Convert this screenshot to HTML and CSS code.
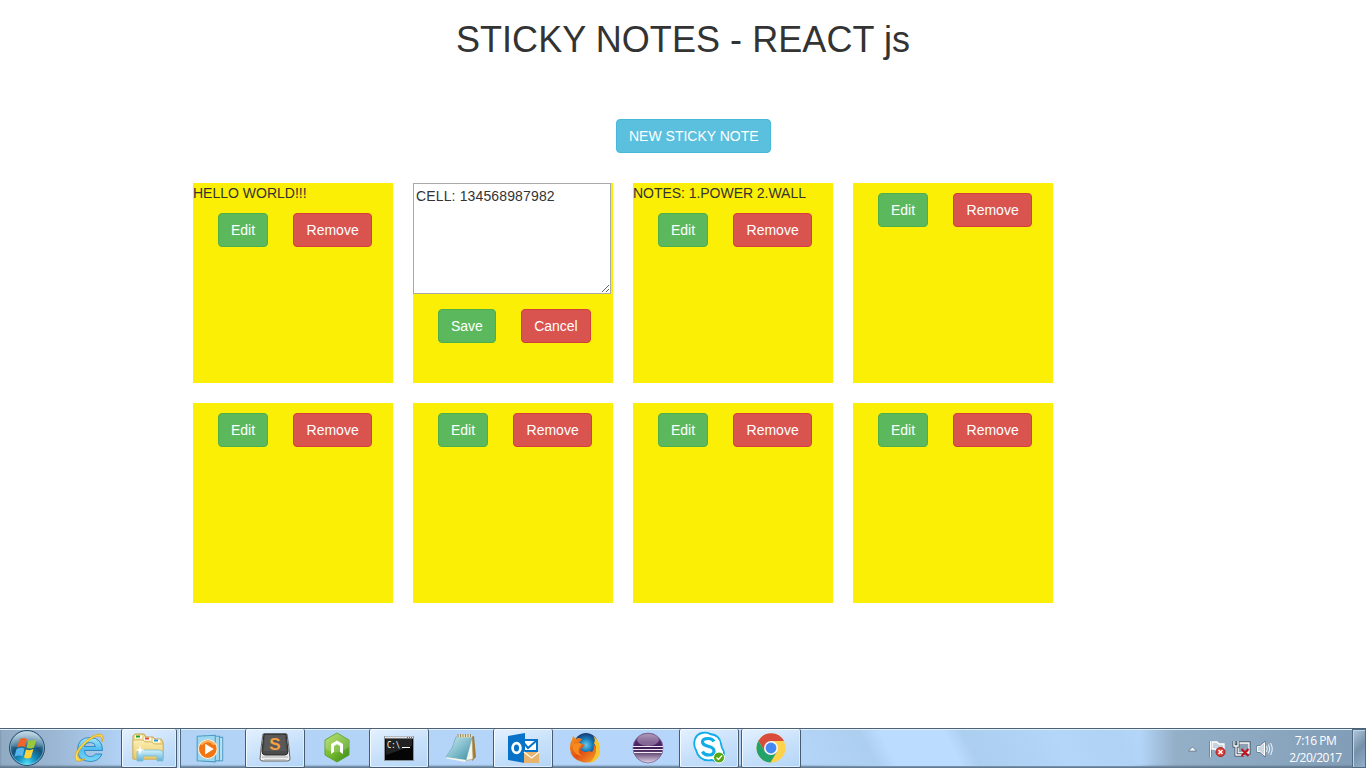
FILE: index.html
```html
<!DOCTYPE html>
<html lang="en">
<head>
<meta charset="utf-8">
<title>Sticky Notes</title>
<link rel="stylesheet" href="styles.css">
</head>
<body>
<main class="page">
  <h1 class="title">STICKY NOTES - REACT js</h1>
  <div class="toolbar"><button class="btn btn-info">NEW STICKY NOTE</button></div>
  <section class="board">
    <article class="note"><p class="text">HELLO WORLD!!!</p><div class="actions"><button class="btn btn-success">Edit</button><button class="btn btn-danger">Remove</button></div></article>
    <article class="note"><textarea class="editor" spellcheck="false">CELL: 134568987982</textarea><div class="actions actions-editing"><button class="btn btn-success">Save</button><button class="btn btn-danger btn-cancel">Cancel</button></div></article>
    <article class="note"><p class="text text-list">NOTES: 1.POWER 2.WALL</p><div class="actions"><button class="btn btn-success">Edit</button><button class="btn btn-danger">Remove</button></div></article>
    <article class="note"><div class="actions"><button class="btn btn-success">Edit</button><button class="btn btn-danger">Remove</button></div></article>
    <article class="note"><div class="actions"><button class="btn btn-success">Edit</button><button class="btn btn-danger">Remove</button></div></article>
    <article class="note"><div class="actions"><button class="btn btn-success">Edit</button><button class="btn btn-danger">Remove</button></div></article>
    <article class="note"><div class="actions"><button class="btn btn-success">Edit</button><button class="btn btn-danger">Remove</button></div></article>
    <article class="note"><div class="actions"><button class="btn btn-success">Edit</button><button class="btn btn-danger">Remove</button></div></article>
  </section>
</main>
<footer class="taskbar">
  <div class="slot slot-start">
    <svg width="38" height="38" viewBox="0 0 38 38">
      <defs>
        <radialGradient id="orb" cx=".5" cy=".95" r=".85"><stop offset="0" stop-color="#4fe2fa"/><stop offset=".3" stop-color="#1690c0"/><stop offset=".62" stop-color="#155277"/><stop offset="1" stop-color="#6f9fbe"/></radialGradient>
        <linearGradient id="gloss" x2="0" y2="1"><stop offset="0" stop-color="#fff" stop-opacity=".55"/><stop offset="1" stop-color="#fff" stop-opacity=".08"/></linearGradient>
      </defs>
      <circle cx="19" cy="19" r="17.500" fill="url(#orb)" stroke="#284d68"/>
      <circle cx="19" cy="19" r="16.500" fill="none" stroke="#a8d2e6" stroke-opacity=".55"/>
      <path d="M3.500 17Q5 3 19 2.500Q33 3 34.500 17Q19 22 3.500 17Z" fill="url(#gloss)"/>
      <path d="M11.500 10.500Q15 8 19 10L17 18Q13.500 16.500 9 18.500Z" fill="#ef6428"/>
      <path d="M20.500 11Q24 12.500 28.500 10L26 18.500Q22 20.500 18.500 18.500Z" fill="#99c83c"/>
      <path d="M8.500 20Q13 18 16.500 19.500L14.500 27.500Q11 25.500 6.500 28Z" fill="#55b5ed"/>
      <path d="M18 20.500Q22 22 25.500 20L23 28.500Q19.500 30.500 16 28.500Z" fill="#ffd438"/>
    </svg>
  </div>
  <div class="slot slot-ie">
    <svg width="34" height="34" viewBox="0 0 34 34">
      <defs><linearGradient id="ie" x2="0" y2="1"><stop offset="0" stop-color="#a4e6fc"/><stop offset=".5" stop-color="#4fbdf0"/><stop offset="1" stop-color="#79d7f7"/></linearGradient></defs>
      <path d="M30.500 19.500H12.500Q13 25.500 18.500 25.500Q22 25.500 23.500 23H30Q27 30.500 18 30.500Q5.500 30 5.500 18.500Q6 6.500 18 6.500Q30.500 7 30.500 19.500ZM12.500 15.500H23.500Q23 11.500 18.500 11.500Q13 11.500 12.500 15.500Z" fill="url(#ie)" stroke="#2d83c0" stroke-width=".9" fill-rule="evenodd"/>
      <path d="M30 11Q33 3 27 3Q20 4 11.500 12Q1 22 3.500 28.500Q6 32 13 28Q7 29.500 6 26Q4 21 14 12Q22 5 27 5Q30 5 30 11Z" fill="#ffe04d" stroke="#d9a51d" stroke-width=".8"/>
    </svg>
  </div>
  <div class="slot slot-files open">
    <svg width="34" height="34" viewBox="0 0 34 34">
      <defs><linearGradient id="folder" x2="0" y2="1"><stop offset="0" stop-color="#fbf0b5"/><stop offset="1" stop-color="#e9c967"/></linearGradient><linearGradient id="stand" x2="0" y2="1"><stop offset="0" stop-color="#d4f3fc"/><stop offset="1" stop-color="#61b3d7"/></linearGradient></defs>
      <path d="M2 28V5L4 3H13L15 6H22L24 8H30L32 11V28Z" fill="#f2dd92" stroke="#c7a34b"/>
      <path d="M4 6H11M13 8H20M22 10H29" stroke="#fff" stroke-width="3"/>
      <path d="M5 5.500H9" stroke="#13a51b" stroke-width="2"/><path d="M14 7.500H18" stroke="#e34829" stroke-width="2"/><path d="M23 9.500H27" stroke="#2797d5" stroke-width="2"/>
      <path d="M2 9H12L14 11H21L23 13H32V28H2Z" fill="url(#folder)" stroke="#d1b15a" stroke-width=".8"/>
      <path d="M6 30V22Q6 19 9 19H28Q32 19 32 22V30H26V25H12V30Z" fill="url(#stand)" stroke="#78bdd7" stroke-width=".8"/>
      <path d="M9 14L10 18L14 19L10 20L9 24L8 20L4 19L8 18Z" fill="#fff"/>
    </svg>
  </div>
  <div class="stack-edge"></div>
  <div class="slot slot-wide">
    <svg class="media-icon" width="34" height="34" viewBox="0 0 32 32">
      <path d="M10 6H27V28H10Z" fill="#b5e2f4" stroke="#589fc4"/><path d="M8 5H24V28H8Z" fill="#a4d8ef" stroke="#4ba1c8"/><path d="M3 5L20 4V29L3 28Z" fill="#9bd8f0" stroke="#4e9dc2"/>
      <circle cx="13" cy="17" r="8.800" fill="#f37512" stroke="#fff3df"/><path d="M7 13A7 7 0 0 1 19 13" fill="none" stroke="#ffb562" stroke-width="2"/><path d="M10.500 12V22L18.500 17Z" fill="#fff"/>
    </svg>
  </div>
  <div class="slot open">
    <svg width="34" height="34" viewBox="0 0 34 34">
      <path d="M5 3H29Q31 15 32 28Q32 30 29 30H5Q2 30 2 28Q3 15 5 3Z" fill="#eee" stroke="#666"/>
      <path d="M6 3H28L30 20Q30 24 27 24H7Q4 24 4 20Z" fill="#4c4c4c" stroke="#292929"/><path d="M7 4H27L28 20H6Z" fill="#595959"/><path d="M4 26H30M6 29H28" stroke="#aaa"/>
      <text class="sublime-letter" x="17" y="18.500" text-anchor="middle">S</text>
    </svg>
  </div>
  <div class="slot slot-wide">
    <svg width="32" height="32" viewBox="0 0 32 32">
      <defs><linearGradient id="hex" x2="1" y2="1"><stop stop-color="#a9db4f"/><stop offset=".55" stop-color="#6eb52c"/><stop offset="1" stop-color="#398619"/></linearGradient></defs>
      <path d="M16 1L28 8V23L16 30L4 23V8Z" fill="url(#hex)" stroke="#5ca22c"/><path d="M16 1L28 8V15Q14 25 4 16V8Z" fill="#fff" opacity=".18"/>
      <path d="M10 22V12L16 8.500L22 12V22L19 20V14L16 12.300L13 14V20Z" fill="#fff"/>
    </svg>
  </div>
  <div class="slot open">
    <svg width="32" height="32" viewBox="0 0 32 32">
      <path d="M1.500 4.500H30.500V28.500H1.500Z" fill="#050505" stroke="#88929b"/><path d="M2 5.500H30" stroke="#e2e5e7" stroke-width="2"/><path d="M24 5.500H29" stroke="#607080" stroke-dasharray="1 1"/><path d="M3 7H29V14L3 23Z" fill="#777" opacity=".26"/>
      <text class="prompt" x="4" y="16" textLength="13" lengthAdjust="spacingAndGlyphs">C:\</text><path d="M19 15.500H27" stroke="#fff"/>
    </svg>
  </div>
  <div class="slot slot-wide">
    <svg width="34" height="34" viewBox="0 0 34 34">
      <defs><linearGradient id="notepad" x2="1" y2="1"><stop stop-color="#c9ecef"/><stop offset=".5" stop-color="#86bfce"/><stop offset="1" stop-color="#3991a5"/></linearGradient></defs>
      <path d="M27 6L30 5L32 26L28 30Z" fill="#a27b37"/><path d="M26 6L28 7L29 28L20 30Z" fill="#f6f5e9" stroke="#aaa078" stroke-width=".6"/><path d="M12 6L28 6L22 29L2 26Q9 18 12 6Z" fill="url(#notepad)" stroke="#71a7b5" stroke-width=".7"/><path d="M2 26L22 29L21 31L3 27.500Z" fill="#f3f6ee"/><path d="M13 5H28" stroke="#eadfba" stroke-width="3"/><path d="M14 3V6M16.500 3V6M19 3V6M21.500 3V6M24 3V6M26.500 3V6" stroke="#968963"/>
    </svg>
  </div>
  <div class="slot slot-outlook open">
    <svg width="34" height="34" viewBox="0 0 34 34">
      <path d="M16 9H31V20H16Z" fill="#fff" stroke="#0872c8" stroke-width="2"/><path d="M17 11L22 17L30 10" fill="none" stroke="#0872c8" stroke-width="2"/>
      <path d="M2 5L19 2V32L2 29Z" fill="#0872c8"/><ellipse cx="10.500" cy="17" rx="3.900" ry="4.900" fill="none" stroke="#fff" stroke-width="2.700"/>
      <path d="M18 21H33V32H18Z" fill="#e7b36d"/><path d="M18 21L25.500 27L33 21" fill="none" stroke="#fff" stroke-width="1.300"/>
    </svg>
  </div>
  <div class="slot slot-wide">
    <svg width="32" height="32" viewBox="0 0 32 32">
      <defs><radialGradient id="globe"><stop stop-color="#67ceed"/><stop offset=".55" stop-color="#1778b8"/><stop offset="1" stop-color="#16386f"/></radialGradient><linearGradient id="fox" x2="1" y2="1"><stop stop-color="#f69b20"/><stop offset=".5" stop-color="#e34d16"/><stop offset="1" stop-color="#f5b32a"/></linearGradient></defs>
      <circle cx="17" cy="13" r="12" fill="url(#globe)"/>
      <path d="M4 4L7 7Q9 5 13 7L10 11L16 13L13 16L11 17Q15 22 20 19L23 20Q26 17 24 12L27 15L26 8Q34 18 28 26Q22 32 13 30Q2 27 1 17Q1 10 3 8Z" fill="url(#fox)"/>
      <path d="M24 4Q32 9 31 20Q30 29 20 31Q28 25 27 15L25 11Q27 8 24 4Z" fill="#f9c52f"/><path d="M3 9L5 12L9 11L13 12L11 15Q7 20 13 24Q6 23 4 17" fill="#f78a1c"/>
    </svg>
  </div>
  <div class="slot slot-eclipse">
    <svg width="32" height="32" viewBox="0 0 32 32">
      <defs><linearGradient id="eclipse" x2="0" y2="1"><stop stop-color="#8c7599"/><stop offset=".3" stop-color="#54286d"/><stop offset=".55" stop-color="#3b1d50"/><stop offset="1" stop-color="#e2d5e9"/></linearGradient></defs>
      <circle cx="16" cy="16" r="15" fill="url(#eclipse)" stroke="#806394" stroke-width=".8"/><ellipse cx="16" cy="8" rx="11" ry="6" fill="#fff" opacity=".3"/><path d="M1 14.500H31M1 17.500H31M2 20.500H30" stroke="#f3eaf8" stroke-width="1.200"/>
    </svg>
  </div>
  <div class="slot slot-skype open">
    <svg width="34" height="34" viewBox="0 0 34 34">
      <path d="M10 2Q15 1 18 3Q28 4 29 13L30 17Q34 22 30 27Q26 32 20 29Q7 31 4 19Q1 14 3 8Q5 3 10 2Z" fill="#fff" stroke="#12ace8" stroke-width="1.800"/>
      <path d="M22 10.500Q20.500 7.500 16 7.500Q10.500 7.500 10.500 11Q10.500 14 17 15.500Q22 17 22 20Q22 24 17 24Q12 24 10.500 20.500" fill="none" stroke="#12ace8" stroke-width="3.200"/>
      <circle cx="27" cy="26.500" r="5.500" fill="#55a716" stroke="#fff"/><path d="M24.500 26.500L26.500 28.500L30 24.500" fill="none" stroke="#fff" stroke-width="1.300"/>
    </svg>
  </div>
  <div class="slot slot-chrome open">
    <svg width="32" height="32" viewBox="0 0 32 32">
      <circle cx="16" cy="16" r="14.500" fill="#ffd24b"/><path d="M3.400 8.800A14.500 14.500 0 0 1 29 9H16L10 19.500Z" fill="#d94b3b"/><path d="M3.400 8.800A14.500 14.500 0 0 0 15.500 30.500L22 19.500H10Z" fill="#23a36a"/><circle cx="16" cy="16" r="7" fill="#f5f6f6"/><circle cx="16" cy="16" r="5.400" fill="#4688f1"/>
    </svg>
  </div>
  <div class="glass"></div>
  <div class="tray">
    <svg class="tray-icons" width="90" height="24" viewBox="0 0 90 24">
      <path d="M2.500 14L6.500 10L10.500 14Z" fill="#fff" stroke="#52677a" stroke-width=".7"/>
      <path d="M24.500 4V20" stroke="#435464" stroke-width="3"/><path d="M24.500 4V20" stroke="#fff" stroke-width="1.600"/><path d="M26 5H31L33 7H38V14H31L29 12H26Z" fill="#c8d4dd" stroke="#fff" stroke-width="1.300"/><circle cx="34.500" cy="15" r="4.500" fill="#df3e38" stroke="#a61d1d"/><path d="M32.500 13L36.500 17M36.500 13L32.500 17" stroke="#fff" stroke-width="1.500"/>
      <path d="M52 6H63V16H52Z" fill="#8ca2b4" stroke="#354552" stroke-width="3"/><path d="M52 6H63V16H52Z" fill="#8ca2b4" stroke="#fff" stroke-width="1.300"/><path d="M48 4V9H52V4M50 9V18H58" fill="none" stroke="#354552" stroke-width="2.800"/><path d="M48 4V9H52V4M50 9V18H58" fill="none" stroke="#fff" stroke-width="1.300"/><path d="M55.500 12L62.500 19M62.500 12L55.500 19" stroke="#c5101b" stroke-width="2.100"/>
      <path d="M71.500 9.500H74L78.500 5.500V18.500L74 14.500H71.500Z" fill="#e5edf2" stroke="#54687a" stroke-width="1.800"/><path d="M71.500 9.500H74L78.500 5.500V18.500L74 14.500H71.500Z" fill="#cbd7e0" stroke="#fff"/><path d="M80.500 9Q82 12 80.500 15M82.500 7.500Q85 12 82.500 16.500M84.500 6Q88 12 84.500 18" fill="none" stroke="#fff" stroke-width=".9"/>
    </svg>
    <div class="clock"><span>7:16 PM</span><span>2/20/2017</span></div>
  </div>
  <div class="show-desktop"></div>
</footer>
</body>
</html>
```
FILE: styles.css
```css
* { box-sizing: border-box; }
body { margin: 0; height: 768px; overflow: hidden; display: flex; flex-direction: column; background: #fff; color: #333; font: 14px/20px "Liberation Sans", Arial, sans-serif; }
.page { flex: 1; padding-top: 20px; }
.title { margin: 0; height: 40px; text-align: center; font-size: 36px; line-height: 40px; font-weight: 400; letter-spacing: .06px; }
.toolbar { display: flex; padding: 59px 0 0 616px; }
.btn { height: 34px; padding: 6px 12px; border: 1px solid; border-radius: 4px; color: #fff; font: inherit; white-space: nowrap; }
.btn-info { width: 155px; background: #5bc0de; border-color: #46b8da; }
.btn-success { background: #5cb85c; border-color: #4cae4c; }
.btn-danger { width: 79px; background: #d9534f; border-color: #d43f3a; }
.btn-cancel { width: 70px; }
.board { display: grid; grid-template-columns: repeat(4, 200px); gap: 20px; padding: 30px 0 0 193px; }
.note { height: 200px; background: #fcef06; }
.text { margin: 0; height: 20px; }
.text-list { letter-spacing: -.04px; }
.actions { display: flex; gap: 25px; padding: 10px 0 0 25px; }
.actions-editing { padding-top: 15px; }
.editor { display: block; width: 198px; height: 111px; padding: 2px; border: 1px solid #a9a9a9; border-radius: 0; resize: both; color: #333; background: #fff; font: inherit; letter-spacing: .14px; outline: none; }
.taskbar { height: 40px; display: flex; border-top: 1px solid #4c6076; box-shadow: inset 0 1px #e2f2ff, inset 0 -2px 2px #60788e; background: linear-gradient(90deg, #91aac3 0, #9bb7d4 55px, #b1d2f5 121px, #b5d6fa 620px, #b3d5f8 1140px, #94afc8 1175px, #8ca8c1 1260px, #829db7 1350px); }
.slot { width: 60px; flex: none; display: flex; align-items: center; justify-content: center; padding-bottom: 1px; }
.slot-start { width: 54px; }
.slot-ie { width: 67px; padding-left: 3px; }
.slot-files { width: 56px; padding-right: 2px; }
.slot-wide { width: 64px; }
.media-icon { margin-right: 4px; }
.slot-outlook { width: 60px; }
.slot-outlook + .slot-wide { width: 63px; }
.slot-eclipse { width: 63px; }
.slot-skype { margin-right: 2px; }
.open { border: 1px solid #475c70; border-top: 0; border-radius: 2px; box-shadow: inset 1px 1px #f4faff, inset -1px -1px #dceeff; background: linear-gradient(160deg, #e4f1ff, #c6e0fa 55%, #b4d5f7); }
.stack-edge { width: 4px; border-right: 1px solid #53687c; box-shadow: inset -1px 0 #e4f2ff; background: #c1dcf6; }
.sublime-letter { font: bold 17px "Liberation Sans", sans-serif; fill: #f6a044; }
.prompt { font: 9px "DejaVu Sans Mono", monospace; fill: #fff; }
.glass { width: 350px; height: 36px; margin: 1px 0 0; background: linear-gradient(62deg, #b9daff00 0, #acceef 67px, #bbdcff 86px, #bbdcff 142px, #acceef 158px, #b3d6f9 240px, #b0d2f4 292px, #b9daff00 310px); }
.tray { margin-left: auto; display: flex; align-items: center; }
.tray-icons { margin-right: 7px; }
.clock { width: 69px; padding-right: 4px; display: flex; flex-direction: column; align-items: center; color: #fff; font: 12px/17px "Open Sans", "Noto Sans", sans-serif; letter-spacing: -.5px; }
.show-desktop { width: 14px; flex: none; border: 1px solid #526b82; box-shadow: inset 1px 1px #bdd5e9; background: linear-gradient(135deg, #b0c8de, #7590aa 50%, #91b0cc); }
```
